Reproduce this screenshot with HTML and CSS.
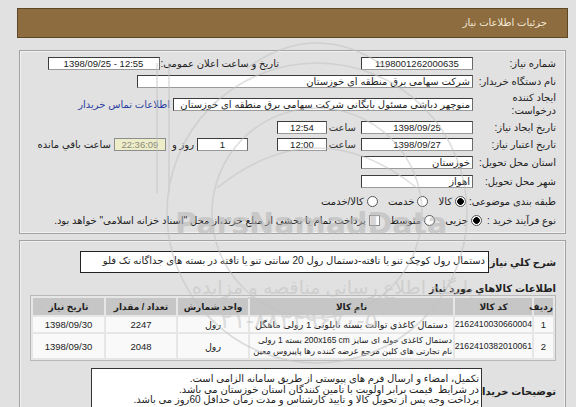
FILE: index.html
```html
<!DOCTYPE html>
<html lang="fa" dir="rtl">
<head>
<meta charset="utf-8">
<title>جزئیات اطلاعات نیاز</title>
<link rel="stylesheet" href="styles.css">
</head>
<body>
<div class="page">
  <div class="header">جزئیات اطلاعات نیاز</div>

  <div class="panel info">
    <div class="row r1">
      <div class="lbl">شماره نیاز:</div>
      <div class="box w112 c">1198001262000635</div>
      <div class="txt pub">تاریخ و ساعت اعلان عمومی:</div>
      <div class="box w112 c pubbox">1398/09/25 - 12:55</div>
    </div>
    <div class="row r2">
      <div class="lbl">نام دستگاه خریدار:</div>
      <div class="box w336">شرکت سهامی برق منطقه ای خوزستان</div>
    </div>
    <div class="row r3">
      <div class="lbl two">ایجاد کننده<br>درخواست:</div>
      <div class="box w300">منوچهر دباشی مسئول بایگانی شرکت سهامی برق منطقه ای خوزستان</div>
      <a class="link" href="#">اطلاعات تماس خریدار</a>
    </div>
    <div class="row r4">
      <div class="lbl">تاریخ ایجاد نیاز:</div>
      <div class="box w112 c">1398/09/25</div>
      <div class="txt hr">ساعت</div>
      <div class="box w50 c hrbox">12:54</div>
    </div>
    <div class="row r5">
      <div class="lbl">تاریخ اعتبار نیاز:</div>
      <div class="box w112 c">1398/09/27</div>
      <div class="txt hr">ساعت</div>
      <div class="box w50 c hrbox">12:00</div>
      <div class="box w51 c days">1</div>
      <div class="txt and">روز و</div>
      <div class="box w52 c timer">22:36:09</div>
      <div class="txt left">ساعت باقي مانده</div>
    </div>
    <div class="row r6">
      <div class="lbl">استان محل تحویل:</div>
      <div class="box w112">خوزستان</div>
    </div>
    <div class="row r7">
      <div class="lbl">شهر محل تحویل:</div>
      <div class="box w112">اهواز</div>
    </div>
    <div class="row r8">
      <div class="lbl">طبقه بندی موضوعی:</div>
      <span class="radio on first8"></span><span class="opt">کالا</span>
      <span class="radio"></span><span class="opt">خدمت</span>
      <span class="radio"></span><span class="opt">کالا/خدمت</span>
    </div>
    <div class="row r9">
      <div class="lbl narrow">نوع فرآیند خرید :</div>
      <span class="radio on"></span><span class="opt">جزیی</span>
      <span class="radio"></span><span class="opt">متوسط</span>
      <span class="check"></span><span class="opt">پرداخت تمام یا بخشی از مبلغ خرید،از محل "اسناد خزانه اسلامی" خواهد بود.</span>
    </div>
  </div>

  <div class="panel items">
    <div class="desc">
      <div class="blbl">شرح کلي نياز:</div>
      <div class="descbox">دستمال رول کوچک تنو یا تافته-دستمال رول 20 سانتی تنو یا تافته در بسته های جداگانه تک فلو</div>
    </div>
    <div class="heading">اطلاعات کالاهاي مورد نياز</div>
    <div class="tablewrap">
      <table class="goods">
        <thead>
          <tr>
            <th class="c-idx">ردیف</th>
            <th class="c-code">کد کالا</th>
            <th class="c-name">نام کالا</th>
            <th class="c-unit">واحد شمارش</th>
            <th class="c-qty">تعداد / مقدار</th>
            <th class="c-date">تاریخ نیاز</th>
          </tr>
        </thead>
        <tbody>
          <tr class="tr1">
            <td>1</td>
            <td class="code">2162410030660004</td>
            <td>دستمال کاغذی توالت بسته نایلونی 1 رولی ماهگل</td>
            <td>رول</td>
            <td class="num">2247</td>
            <td class="num">1398/09/30</td>
          </tr>
          <tr class="tr2">
            <td>2</td>
            <td class="code">2162410382010061</td>
            <td class="name2">دستمال کاغذی حوله ای سایز 200x165 cm بسته 1 رولی<br>نام تجارتی های کلین مرجع عرضه کننده رها پاپیروس معین</td>
            <td>رول</td>
            <td class="num">2048</td>
            <td class="num">1398/09/30</td>
          </tr>
        </tbody>
      </table>
    </div>
    <div class="notes">
      <div class="blbl nlbl">توضیحات خریدار:</div>
      <div class="notebox">تکمیل، امضاء و ارسال فرم های پیوستی از طریق سامانه الزامی است.<br>در شرایط &nbsp;قیمت برابر اولویت با تامین کنندگان استان خوزستان می باشد.<br>پرداخت وجه پس از تحویل کالا و تایید کارشناس و مدت زمان حداقل 60روز می باشد.</div>
    </div>
  </div>

  <div class="watermark" aria-hidden="true">
    <svg class="wm-art" width="560" height="400" viewBox="0 0 560 400">
      <g fill="none" stroke="#c3c3c3" stroke-width="1.6">
        <circle cx="300" cy="205" r="150"/>
        <circle cx="300" cy="205" r="105"/>
        <path d="M140 55 V185 M152 55 V185"/>
        <path d="M200 180 Q300 100 400 180"/>
        <path d="M230 60 Q300 10 370 60"/>
      </g>
    </svg>
    <div class="wm-brand">ParsNamadData</div>
    <div class="wm-fa">پایگاه اطلاع رسانی مناقصه و مزایده</div>
    <div class="wm-num">۰۲۱-۸۸۳۴۹۶۷۰-۵</div>
  </div>
</div>
</body>
</html>
```

FILE: styles.css
```css
html, body {
  margin: 0;
  padding: 0;
  background: #e1e1e1;
}
body {
  padding: 8px 8px 0 8px;
  font-family: "Liberation Sans", "DejaVu Sans", sans-serif;
  font-size: 10px;
  color: #222;
  overflow: hidden;
}
.page {
  position: relative;
  width: 551px;
  direction: rtl;
}
.header {
  height: 28px;
  background: #8d6c3f;
  border: 1px solid #5e4727;
  color: #f4ead6;
  font-size: 10px;
  line-height: 28px;
  padding-right: 20px;
}
.panel {
  margin: 12px 2px 0 2px;
  border: 1px solid #a3a3a3;
  box-shadow: inset 0 0 0 1px #f0f0f0;
  padding: 3px 9px 5px 9px;
}
.row {
  display: flex;
  align-items: center;
  white-space: nowrap;
}
.r1 { height: 18px; }
.r2 { height: 18px; }
.r3 { height: 28px; }
.r4 { height: 18px; }
.r5 { height: 17px; }
.r6 { height: 18px; }
.r7 { height: 20px; }
.r8 { height: 21px; }
.r9 { height: 16px; }

.lbl {
  width: 80px;
  flex: none;
  color: #222;
}
.lbl.two { line-height: 13px; }
.lbl.narrow { width: 74px; }
.box {
  height: 13px;
  line-height: 11px;
  background: #fff;
  border: 1px solid #3c3c3c;
  border-right-color: #6a6a6a;
  border-bottom-color: #9a9a9a;
  padding: 0 2px;
  margin-right: 3px;
  flex: none;
  overflow: hidden;
  box-sizing: border-box;
}
.box.c { text-align: center; direction: ltr; font-size: 9.5px; }
.w112 { width: 112px; }
.w336 { width: 336px; }
.w300 { width: 300px; }
.w50 { width: 50px; }
.w51 { width: 51px; }
.w52 { width: 52px; }
.txt { flex: none; }
.pub { margin-right: 82px; }
.pubbox { margin-right: 1px; }
.link {
  color: #2a3f9e;
  text-decoration: none;
  margin-right: 3px;
}
.hr { margin-right: 5px; width: 24px; color: #333; }
.hrbox { margin-right: 5px; }
.days { margin-right: 29px; }
.and { margin-right: 3px; }
.timer {
  background: #eeedc9;
  color: #8a8a7a;
  margin-right: 6px;
  border-color: #8d8d8d;
}
.left { margin-right: 3px; }

.radio {
  width: 9px;
  height: 9px;
  border: 1px solid #555;
  border-radius: 50%;
  background: #fff;
  flex: none;
  margin-left: 3px;
  margin-right: 10px;
}
.radio.on {
  background: radial-gradient(circle, #000 0 3px, #fff 3.6px);
}
.first8 { margin-right: 10px; }
.r9 .radio.on { margin-right: 0; }
.opt { flex: none; }
.check {
  width: 9px;
  height: 9px;
  border: 1px solid #8a8a8a;
  background: #fff;
  flex: none;
  margin-left: 3px;
  margin-right: 10px;
}

/* items panel */
.items {
  margin-top: 6px;
  padding: 10px 9px 40px 10px;
}
.desc {
  display: flex;
  align-items: center;
}
.blbl {
  font-weight: bold;
  font-size: 10px;
  color: #222;
  flex: none;
  white-space: nowrap;
}
.desc .blbl { width: 67px; }
.descbox {
  width: 409px;
  height: 22px;
  box-sizing: border-box;
  background: #fff;
  border: 1px solid #222;
  padding: 3px 3px 0 3px;
  white-space: nowrap;
  overflow: hidden;
}
.heading {
  font-weight: bold;
  font-size: 10px;
  line-height: 12px;
  margin-top: 10px;
}
.tablewrap {
  margin-top: 0;
  width: 526px;
  border: 1px solid #b8b8b8;
  background: #e6e6e6;
  box-sizing: border-box;
}
.goods {
  width: 100%;
  border-collapse: separate;
  border-spacing: 2px;
  font-size: 9.5px;
  table-layout: fixed;
}
.goods th {
  background: #c6c6c6;
  font-weight: bold;
  height: 17px;
  padding: 0;
  color: #222;
  font-size: 9px;
  white-space: nowrap;
}
.goods td {
  background: #f9f9f9;
  text-align: center;
  padding: 0 1px;
  height: 15px;
  line-height: 11px;
  white-space: nowrap;
  overflow: hidden;
}
.goods td.code { font-size: 8.7px; padding: 0; }
.goods td.num { font-size: 9.5px; }
.goods td.name2 {
  height: 24px;
  font-size: 8.4px;
  text-align: right;
}
.c-idx { width: 19px; }
.c-code { width: 77px; }
.c-name { width: 203px; }
.c-unit { width: 70px; }
.c-qty { width: 70px; }
.c-date { width: 71px; }

.notes {
  display: flex;
  align-items: flex-start;
  margin-top: 7px;
}
.nlbl {
  width: 74px;
  margin-top: 18px;
}
.notebox {
  width: 391px;
  height: 60px;
  box-sizing: border-box;
  background: #fff;
  border: 1px solid #333;
  padding: 5px 2px 0 2px;
  line-height: 10.5px;
  white-space: nowrap;
}

/* watermark overlay */
.watermark {
  position: absolute;
  left: 0;
  top: 0;
  width: 560px;
  height: 400px;
  pointer-events: none;
  opacity: 0.55;
}
.wm-art {
  position: absolute;
  left: 0;
  top: 0;
}
.wm-brand {
  position: absolute;
  left: 158px;
  top: 198px;
  font-family: "DejaVu Sans", sans-serif;
  font-weight: bold;
  font-size: 30px;
  color: #b4b4b4;
  direction: ltr;
}
.wm-fa {
  position: absolute;
  left: 175px;
  top: 268px;
  font-size: 19px;
  color: #c0c0c0;
}
.wm-num {
  position: absolute;
  left: 190px;
  top: 298px;
  font-size: 24px;
  color: #c6c6c6;
  direction: ltr;
}
```
